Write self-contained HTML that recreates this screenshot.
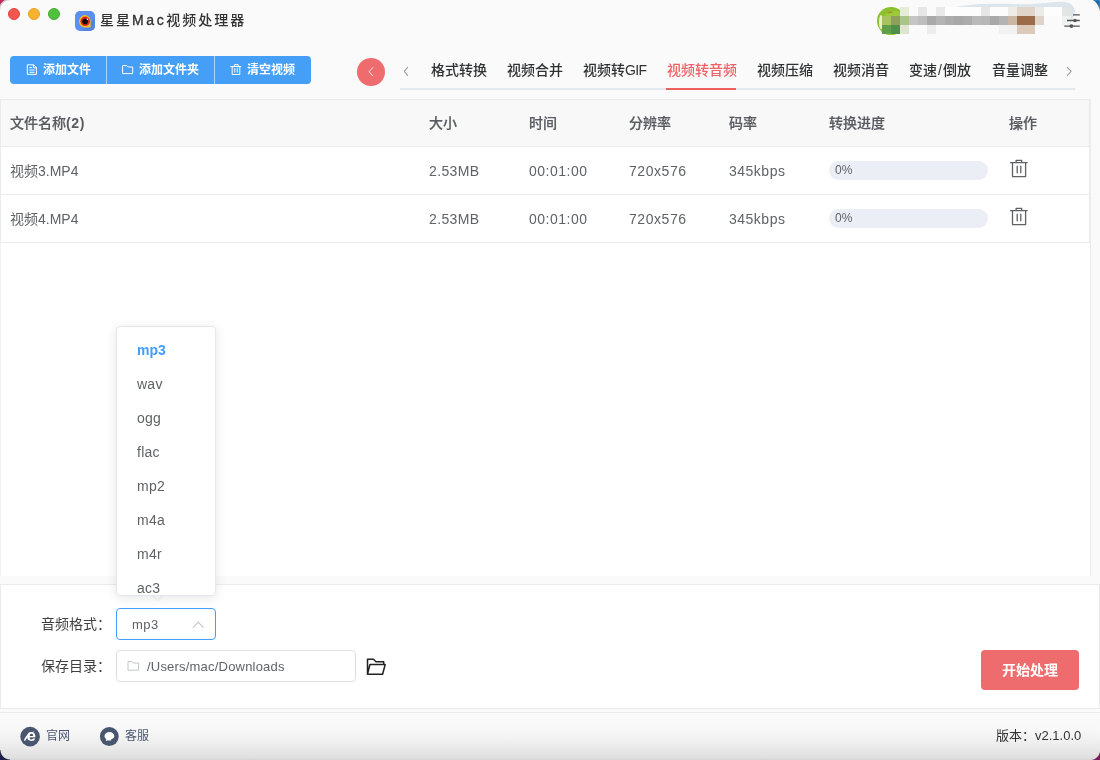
<!DOCTYPE html>
<html lang="zh-CN">
<head>
<meta charset="utf-8">
<title>星星Mac视频处理器</title>
<style>
*{box-sizing:border-box;margin:0;padding:0}
html,body{width:1100px;height:760px;overflow:hidden}
body{position:relative;background:#fafafa;font-family:"Liberation Sans","Noto Sans CJK SC",sans-serif;color:#606266;font-size:14px}
.abs{position:absolute}
#win{position:absolute;left:0;top:0;width:1100px;height:760px;will-change:transform}
/* corners */
.corner{position:absolute;width:20px;height:20px;pointer-events:none}
/* traffic lights */
.tl{position:absolute;top:8px;width:12px;height:12px;border-radius:50%}
/* title */
#appicon{left:75px;top:10.8px;width:20px;height:20.3px;border-radius:5px;background:#5b8ff0;overflow:hidden}
#title{left:100px;top:9px;height:22px;line-height:22px;font-size:14px;letter-spacing:2px;color:#333;font-weight:500;white-space:nowrap}
/* toolbar */
#btns{left:10px;top:56px;width:301px;height:28px;border-radius:4px;background:#459ff7;overflow:hidden}
.btn{position:absolute;top:0;height:28px;line-height:29px;color:#fff;font-size:12px;font-weight:700;white-space:nowrap}
.btn svg{position:absolute;top:8px}
.sep{position:absolute;top:0;width:1px;height:28px;background:rgba(255,255,255,.55)}
#back{left:357px;top:57.8px;width:28px;height:28px;border-radius:50%;background:#ee6b6e}
/* tabs */
#tabline{left:400px;top:88px;width:675px;height:2px;background:#e4e7ed}
.tab{position:absolute;top:59px;height:22px;line-height:22px;font-size:14px;font-weight:500;color:#303133;white-space:nowrap}
.tab.on{color:#ee6266}
#tabbar{left:666px;top:88px;width:70px;height:2px;background:#ee5e5e}
/* table */
#table{left:0;top:99px;width:1090px;height:144px;border:1px solid #ebebeb;border-left-color:#e9ebee;border-bottom:none;background:#fff}
.tr{position:absolute;left:0;width:1088px;height:48px;border-bottom:1px solid #ebebeb}
.th{background:#f8f8f8}
.td{position:absolute;top:1px;height:47px;line-height:47px;margin-left:-1px;white-space:nowrap;font-size:14px;color:#606266}
.th .td{font-weight:500;color:#595b60;top:0;-webkit-text-stroke:.2px #595b60}
.prog{position:absolute;left:828px;top:14px;width:159px;height:19px;border-radius:10px;background:#ebeef5;font-size:12px;line-height:19px;color:#606266;padding-left:6px}

#tablewrap{left:0;top:99px;width:1091px;height:477px;background:#fff;border-right:1px solid #ececec;border-left:1px solid #f0f1f3}
/* dropdown */
#dd{left:116px;top:326px;width:100px;height:270px;background:#fff;border:1px solid #e4e7ed;border-radius:4px;box-shadow:0 2px 12px 0 rgba(0,0,0,.1);overflow:hidden}
.opt{position:absolute;left:20px;height:34px;line-height:34px;font-size:14px;color:#606266;white-space:nowrap;letter-spacing:.25px}
.opt.sel{color:#409eff;font-weight:700;letter-spacing:0}
/* bottom panel */
#panel{left:0;top:584px;width:1100px;height:125px;background:#fff;border:1px solid #ebebeb}
.lbl{position:absolute;left:41px;height:22px;line-height:22px;font-size:14px;color:#3f3f3f;white-space:nowrap}
#sel{left:116px;top:608px;width:100px;height:32px;border:1px solid #409eff;border-radius:4px;background:#fff}
#sel span{position:absolute;left:15px;top:0;line-height:32px;font-size:13px;color:#606266;letter-spacing:.45px}
#path{left:116px;top:650px;width:240px;height:32px;border:1px solid #dcdfe6;border-radius:4px;background:#fff}
#path span{position:absolute;left:30px;top:0;line-height:32px;font-size:13px;color:#606266;white-space:nowrap;letter-spacing:.2px}
#start{left:981px;top:650px;width:98px;height:40px;border-radius:4px;background:#ee6b6e;color:#fff;font-size:14px;font-weight:700;text-align:center;line-height:40px}
/* footer */
#footer{left:0;top:712px;width:1100px;height:48px;border-top:1px solid #ececec;background:linear-gradient(#fafafa 0,#f8f8f8 35%,#efefef 62%,#dfdfdf 96%,#d4d4d4 100%)}
.ft{position:absolute;top:726px;height:20px;line-height:20px;font-size:12px;color:#4a5670;white-space:nowrap}
</style>
</head>
<body>
<div id="win">
<div class="tl" style="left:8px;background:#f0564d;border:.5px solid #e2453c"></div>
<div class="tl" style="left:28px;background:#f7b32f;border:.5px solid #e3a025"></div>
<div class="tl" style="left:48px;background:#4fc13c;border:.5px solid #3fae2e"></div>

<div id="appicon" class="abs">
<svg width="20" height="21" viewBox="0 0 20 21"><path d="M20 7 L20 21 L6 21 Z" fill="#4a7ad8" opacity=".55"/><path d="M10.2 4.1a6.2 6.2 0 1 0 0 12.4h5.4V10.3A6.2 6.2 0 0 0 10.2 4.1z" fill="#f6c21c"/><circle cx="10.2" cy="10.3" r="4.8" fill="#e6261f"/><circle cx="10.1" cy="10.4" r="2.8" fill="#0c0c0c"/><circle cx="12.4" cy="8.2" r=".8" fill="#fff"/></svg>
</div>
<div id="title" class="abs">星星<span style="letter-spacing:2.6px;-webkit-text-stroke:.35px #333">Mac</span>视频处理器</div>


<!-- user -->
<svg class="abs" style="left:950px;top:0" width="130" height="30" viewBox="950 0 130 30"><path d="M955 7.2 C972 3.2 1000 3.6 1020 4.2 C1040 4.6 1052 1.2 1064 1.8 C1074 3 1077 10 1073.5 17 L1071 21 L1062 21 L1062 7.2 Z" fill="#dde5ec"/></svg>
<div class="abs" style="left:877px;top:7px;width:28px;height:28px;border-radius:50%;background:#8cc02c;overflow:hidden"><div class="abs" style="left:3px;top:4px;width:30px;height:30px;border-radius:50%;background:#9ccb3a"></div><div class="abs" style="left:2px;top:8px;width:4px;height:14px;border-radius:50%;background:#e6f2c8"></div><div class="abs" style="left:10px;top:5px;width:6px;height:1.4px;border-radius:50%;background:#a8702a;opacity:.85;transform:rotate(-10deg)"></div></div>
<div class="abs" style="left:882px;top:16px;width:9px;height:9px;background:#a8c25e"></div>
<div class="abs" style="left:891px;top:16px;width:9px;height:9px;background:#8f9e5b"></div>
<div class="abs" style="left:900px;top:16px;width:9px;height:9px;background:#aac58c"></div>
<div class="abs" style="left:909px;top:16px;width:9px;height:9px;background:#c5c5c5"></div>
<div class="abs" style="left:918px;top:16px;width:9px;height:9px;background:#bdbdbd"></div>
<div class="abs" style="left:927px;top:16px;width:9px;height:9px;background:#a9a9a9"></div>
<div class="abs" style="left:936px;top:16px;width:9px;height:9px;background:#b4b4b4"></div>
<div class="abs" style="left:945px;top:16px;width:9px;height:9px;background:#acacac"></div>
<div class="abs" style="left:954px;top:16px;width:9px;height:9px;background:#a8a8a8"></div>
<div class="abs" style="left:963px;top:16px;width:9px;height:9px;background:#acacac"></div>
<div class="abs" style="left:972px;top:16px;width:9px;height:9px;background:#bababa"></div>
<div class="abs" style="left:981px;top:16px;width:9px;height:9px;background:#b7b7b7"></div>
<div class="abs" style="left:990px;top:16px;width:9px;height:9px;background:#a8a8a8"></div>
<div class="abs" style="left:999px;top:16px;width:9px;height:9px;background:#b3b3b3"></div>
<div class="abs" style="left:1008px;top:16px;width:9px;height:9px;background:#cbb5a3"></div>
<div class="abs" style="left:1017px;top:16px;width:18px;height:9px;background:#9c6c48"></div>
<div class="abs" style="left:1035px;top:16px;width:9px;height:9px;background:#dfd2c6"></div>
<div class="abs" style="left:900px;top:7px;width:9px;height:9px;background:#e6edd6"></div>
<div class="abs" style="left:918px;top:7px;width:9px;height:9px;background:#e6e6e6"></div>
<div class="abs" style="left:936px;top:7px;width:9px;height:9px;background:#e9e9e9"></div>
<div class="abs" style="left:945px;top:7px;width:36px;height:9px;background:#fdfdfd"></div>
<div class="abs" style="left:981px;top:7px;width:9px;height:9px;background:#e6e6e6"></div>
<div class="abs" style="left:990px;top:7px;width:18px;height:9px;background:#fcfcfc"></div>
<div class="abs" style="left:1008px;top:7px;width:9px;height:9px;background:#efebe7"></div>
<div class="abs" style="left:1017px;top:7px;width:18px;height:9px;background:#e0d5ca"></div>
<div class="abs" style="left:1035px;top:7px;width:9px;height:9px;background:#edebe8"></div>
<div class="abs" style="left:1044px;top:7px;width:18px;height:9px;background:#fdfdfd"></div>
<div class="abs" style="left:1062px;top:7px;width:9px;height:9px;background:#e3e5e5"></div>
<div class="abs" style="left:882px;top:25px;width:9px;height:9px;background:#5f9f4a"></div>
<div class="abs" style="left:891px;top:25px;width:9px;height:9px;background:#4f9048"></div>
<div class="abs" style="left:900px;top:25px;width:9px;height:9px;background:#dde5d0"></div>
<div class="abs" style="left:927px;top:25px;width:9px;height:9px;background:#ececec"></div>
<div class="abs" style="left:999px;top:25px;width:18px;height:9px;background:#f1f1f1"></div>
<div class="abs" style="left:1017px;top:25px;width:18px;height:9px;background:#dbc9ba"></div>
<div class="abs" style="left:1062px;top:16px;width:9px;height:9px;background:#f0f1f1"></div>
<svg class="abs" style="left:1060px;top:10px" width="24" height="20" viewBox="1060 10 24 20"><g stroke="#555" stroke-width="1.4" stroke-linecap="butt"><path d="M1073 14.9 H1079.8 M1067 20.5 H1079.8 M1064.3 26.1 H1079.8"/></g><circle cx="1075" cy="20.5" r="1.8" fill="#555"/><circle cx="1071.4" cy="26.1" r="1.9" fill="#555"/></svg>

<!-- toolbar -->
<div id="btns" class="abs">
  
  <svg class="abs" style="left:0;top:0" width="301" height="28" viewBox="10 56 301 28" fill="none" stroke="#fff" stroke-width="1" stroke-linejoin="round" stroke-linecap="round">
    <path d="M27.7 64.8 H33.6 L36.4 67.6 V74.4 H27.7 Z M33.4 65 V67.8 H36.2 M29.8 67.6 H31.6 M29.8 70 H34.2 M29.8 72.3 H34.2"/>
    <path d="M123 65.6 H126.8 L128.2 67 H132.7 V73.6 H123 Z"/>
    <path d="M230.6 66.6 H240.8 M234.4 66.4 V64.7 H238.2 V66.4 M232.2 66.8 V74.5 H239.8 V66.8 M234.8 68.6 V72.2 M237.3 68.6 V72.2"/>
  </svg>
  <div class="btn" style="left:33px">添加文件</div>
  <div class="sep" style="left:96px"></div>
  <div class="btn" style="left:129px">添加文件夹</div>
  <div class="sep" style="left:204px"></div>
  <div class="btn" style="left:237px">清空视频</div>
</div>
<div id="back" class="abs"><svg width="28" height="28" viewBox="0 0 28 28"><path d="M15.7 9.6 L12.1 13.7 L15.7 17.8" fill="none" stroke="#fff" stroke-opacity=".9" stroke-width=".95" stroke-linecap="round" stroke-linejoin="round"/></svg></div>

<!-- tabs -->
<svg class="abs" style="left:400px;top:62px" width="12" height="18" viewBox="400 62 12 18"><path d="M407.6 67.4 L404.3 71.4 L407.6 75.4" fill="none" stroke="#999ca3" stroke-width="1.1" stroke-linecap="round" stroke-linejoin="round"/></svg>
<svg class="abs" style="left:1063px;top:62px" width="12" height="18" viewBox="1063 62 12 18"><path d="M1067.3 67.4 L1071.2 71.4 L1067.3 75.4" fill="none" stroke="#999ca3" stroke-width="1.1" stroke-linecap="round" stroke-linejoin="round"/></svg>

<div id="tabline" class="abs"></div>
<div id="tabbar" class="abs"></div>
<div class="tab" style="left:431px">格式转换</div>
<div class="tab" style="left:507px">视频合并</div>
<div class="tab" style="left:583px">视频转<span style="letter-spacing:-.7px">GIF</span></div>
<div class="tab on" style="left:667px">视频转音频</div>
<div class="tab" style="left:757px">视频压缩</div>
<div class="tab" style="left:833px">视频消音</div>
<div class="tab" style="left:909px">变速<span style="padding:0 1px">/</span>倒放</div>
<div class="tab" style="left:992px">音量调整</div>

<!-- table -->
<div id="tablewrap" class="abs"></div>
<div id="table" class="abs">
  <div class="tr th" style="top:0;height:47px">
    <div class="td" style="left:10px">文件名称<span style="font-weight:700;-webkit-text-stroke:0;letter-spacing:.7px">(2)</span></div>
    <div class="td" style="left:429px">大小</div>
    <div class="td" style="left:529px">时间</div>
    <div class="td" style="left:629px">分辨率</div>
    <div class="td" style="left:729px">码率</div>
    <div class="td" style="left:829px">转换进度</div>
    <div class="td" style="left:1009px">操作</div>
  </div>
  <div class="tr" style="top:47px">
    <div class="td" style="left:10px">视频3.MP4</div>
    <div class="td" style="left:429px;letter-spacing:.35px">2.53MB</div>
    <div class="td" style="left:529px;letter-spacing:.5px">00:01:00</div>
    <div class="td" style="left:629px;letter-spacing:.55px">720x576</div>
    <div class="td" style="left:729px;letter-spacing:.5px">345kbps</div>
    <div class="prog">0%</div>
  </div>
  <div class="tr" style="top:95px">
    <div class="td" style="left:10px">视频4.MP4</div>
    <div class="td" style="left:429px;letter-spacing:.35px">2.53MB</div>
    <div class="td" style="left:529px;letter-spacing:.5px">00:01:00</div>
    <div class="td" style="left:629px;letter-spacing:.55px">720x576</div>
    <div class="td" style="left:729px;letter-spacing:.5px">345kbps</div>
    <div class="prog">0%</div>
  </div>
</div>


<svg class="abs" style="left:1008px;top:158px" width="22" height="22" viewBox="1008 158 22 22" fill="none" stroke="#5f6166" stroke-width="1.3" stroke-linejoin="round" stroke-linecap="round"><path d="M1010.6 162.7 H1027.2 M1016.1 162.5 V160.4 H1021.7 V162.5 M1012.5 163 V176.6 H1025.6 V163 M1017.2 166.2 V172.8 M1020.8 166.2 V172.8"/></svg>
<svg class="abs" style="left:1008px;top:206px" width="22" height="22" viewBox="1008 158 22 22" fill="none" stroke="#5f6166" stroke-width="1.3" stroke-linejoin="round" stroke-linecap="round"><path d="M1010.6 162.7 H1027.2 M1016.1 162.5 V160.4 H1021.7 V162.5 M1012.5 163 V176.6 H1025.6 V163 M1017.2 166.2 V172.8 M1020.8 166.2 V172.8"/></svg>
<!-- footer -->
<div id="footer" class="abs"></div>
<!-- bottom panel -->
<div id="panel" class="abs"></div>
<div class="lbl" style="top:612.5px">音频格式：</div>
<div class="lbl" style="top:654.5px">保存目录：</div>
<div id="sel" class="abs"><span>mp3</span>
<svg class="abs" style="left:75px;top:12px" width="14" height="8" viewBox="0 0 14 8"><path d="M1.2 6.3 L6.2 1.1 L11.2 6.3" fill="none" stroke="#c0c4cc" stroke-width="1.1" stroke-linecap="round" stroke-linejoin="round"/></svg>
</div>
<div id="path" class="abs"><span>/Users/mac/Downloads</span>
<svg class="abs" style="left:10px;top:8.5px" width="13" height="12" viewBox="0 0 13 12"><path d="M1 1.5 H5 L6.2 3 H11.6 V10.2 H1 Z" fill="none" stroke="#c0c4cc" stroke-width="1" stroke-linejoin="round"/></svg>
</div>
<svg class="abs" style="left:364px;top:656px" width="24" height="22" viewBox="364 656 24 22"><path d="M367.5 674.2 V659.3 H373.5 L376 661.7 H383.7 V664.4 M367.5 674.2 L369.9 664.5 H385.2 L382.6 674.2 Z" fill="none" stroke="#222" stroke-width="1.5" stroke-linejoin="round" stroke-linecap="round"/></svg>
<div id="start" class="abs">开始处理</div>

<!-- dropdown -->
<div class="abs" style="left:154.3px;top:591.2px;width:7px;height:7px;background:#fff;transform:rotate(45deg);box-shadow:1px 1px 3px rgba(0,0,0,.08)"></div>
<div id="dd" class="abs">
  <div class="opt sel" style="top:6px">mp3</div>
  <div class="opt" style="top:40px">wav</div>
  <div class="opt" style="top:74px">ogg</div>
  <div class="opt" style="top:108px">flac</div>
  <div class="opt" style="top:142px">mp2</div>
  <div class="opt" style="top:176px">m4a</div>
  <div class="opt" style="top:210px">m4r</div>
  <div class="opt" style="top:244px">ac3</div>
</div>

<!-- footer content -->
<svg class="abs" style="left:18px;top:724px" width="24" height="25" viewBox="18 724 24 25"><circle cx="30.1" cy="736.6" r="9.8" fill="#4a5670"/><text x="31.2" y="741.2" font-family="Liberation Sans, sans-serif" font-size="17" font-weight="700" fill="#fff" text-anchor="middle">e</text><path d="M24.2 741 C24 737 29 732.2 35 731.2 C30.6 733.2 27 736.6 25.8 740.3 Z" fill="#fff"/></svg>
<div class="ft" style="left:46px">官网</div>
<svg class="abs" style="left:97px;top:724px" width="24" height="25" viewBox="97 724 24 25"><circle cx="109.3" cy="736.5" r="9.4" fill="#4a5670"/><path d="M104.5 736.2 a4.9 4.1 0 1 1 9.8 0 c0 1.2 -1.4 2.4 -3 3.1 l-0.3 1.1 h-3.8 l-1.3 0.5 l0.3 -1.8 c-1 -0.8 -1.7 -1.8 -1.7 -2.9z" fill="#fff"/></svg>
<div class="ft" style="left:125px">客服</div>
<div class="ft" style="left:996px;font-size:13px;color:#333">版本：v2.1.0.0</div>
<!-- window corners -->
<div class="abs" style="left:0;top:0;width:10px;height:10px;background:radial-gradient(circle at 10px 10px,rgba(190,190,190,0) 9.4px,#c6c6c6 10.3px,#c6c6c6 10.8px,#c4245f 11.6px)"></div>
<svg class="abs" style="left:1088px;top:0" width="12" height="14" viewBox="1088 0 12 14"><path d="M1092.6 0 Q1098.3 3 1100 11.2 L1100 0 Z" fill="#1c67a6" stroke="#fff" stroke-opacity=".5" stroke-width=".5"/></svg>
<div class="abs" style="left:0;bottom:0;width:10px;height:10px;background:radial-gradient(circle at 100% 0,rgba(0,0,0,0) 9px,#1e2147 10px)"></div>
<div class="abs" style="right:0;bottom:0;width:10px;height:10px;background:radial-gradient(circle at 0 0,rgba(122,29,92,0) 9.6px,#7a1d5c 10.6px)"></div>

</div>
</body>
</html>
